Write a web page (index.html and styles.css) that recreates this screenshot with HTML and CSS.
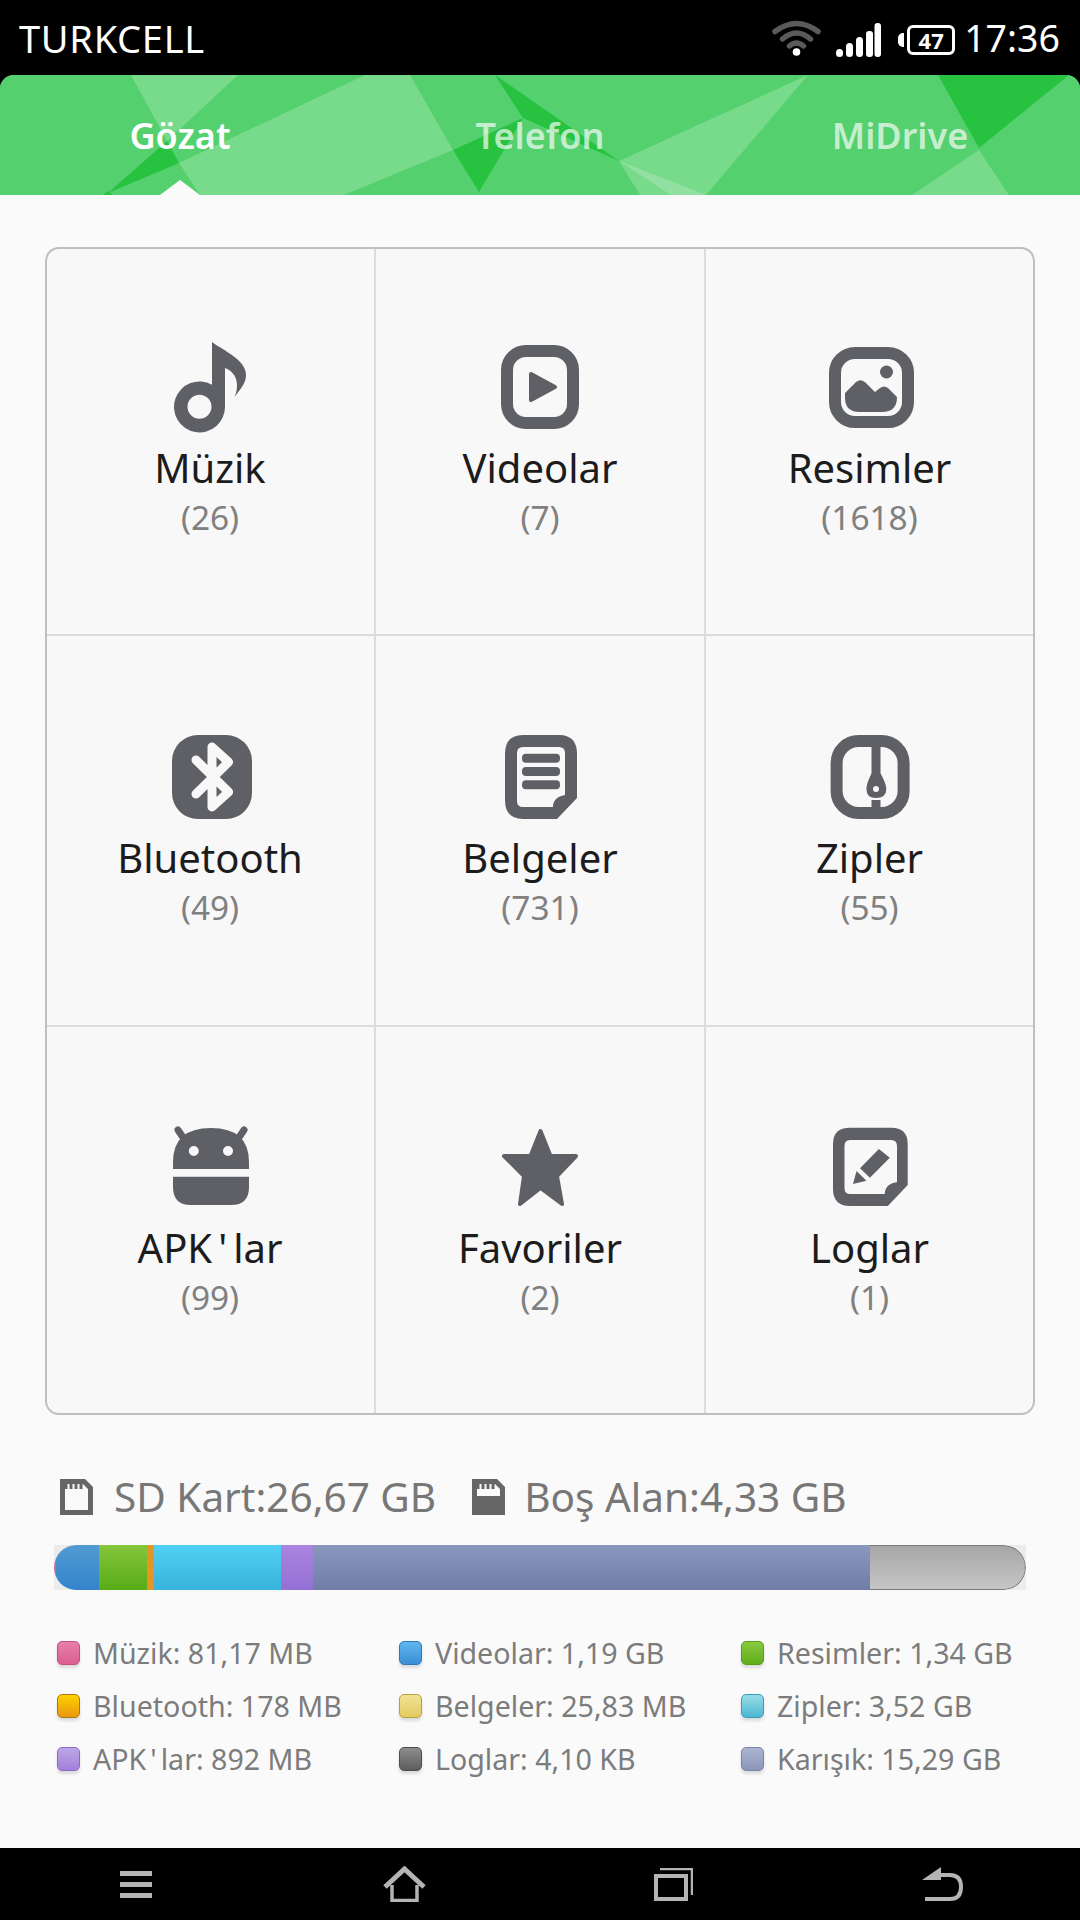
FILE: index.html
```html
<!DOCTYPE html>
<html lang="tr">
<head>
<meta charset="utf-8">
<title>Dosya Yöneticisi</title>
<link rel="stylesheet" href="styles.css">
</head>
<body>
<div class="screen">
  <header class="status">
    <span class="carrier">TURKCELL</span>
    <div class="status-right">
      <svg class="i-wifi" viewBox="0 0 49 37" width="49" height="37"><g fill="none" stroke="#5a5a5a" stroke-width="5.5" stroke-linecap="round"><path d="M3 12.5Q24.5 -3.5 46 12.5"/><path d="M10.500 20Q24.500 8 38.500 20"/><path d="M17.500 27Q24.500 21 31.500 27"/></g><circle cx="24.500" cy="33" r="3.800" fill="#fff"/></svg>
      <svg class="i-signal" viewBox="0 0 45 34" width="45" height="34"><g fill="#fff"><rect x="0" y="26" width="7" height="8" rx="3.500"/><rect x="10" y="20" width="7" height="14" rx="3.500"/><rect x="20" y="14" width="7" height="20" rx="3.500"/><rect x="30" y="8" width="7" height="26" rx="3"/><rect x="38.500" y="0" width="6.500" height="34" rx="3"/></g></svg>
      <div class="batt"><i class="batt-nub"></i><span class="batt-box">47</span></div>
      <span class="clock">17:36</span>
    </div>
  </header>

  <nav class="tabs">
    <svg class="tabs-bg" viewBox="0 75 1080 120" width="1080" height="120" preserveAspectRatio="none">
      <rect x="0" y="75" width="1080" height="120" fill="#54d06f"/>
      <g fill="#78da8b">
        <polygon points="131,75 238,75 167,141"/>
        <polygon points="365,75 410,75 453,150 344,195 200,195 179,163"/>
        <polygon points="619,161 808,75 706,195 640,195"/>
        <polygon points="979,150 1009,195 912,195"/>
      </g>
      <polygon points="619,161 706,195 671,195" fill="#92e1a2"/>
      <g fill="#27c240">
        <polygon points="167,141 179,163 108,193"/>
        <polygon points="108,191 103,195 113,195"/>
        <polygon points="453,150 523,118 479,192"/>
        <polygon points="495,75 523,118 619,161"/>
        <polygon points="938,75 1069,75 979,148"/>
      </g>
    </svg>
    <span class="tab tab-active">Gözat</span>
    <span class="tab">Telefon</span>
    <span class="tab">MiDrive</span>
    <i class="tab-pointer"></i>
  </nav>

  <main class="content">
    <section class="grid">
      <div class="cell">
        <svg class="icon" viewBox="0 0 100 92"><path fill-rule="evenodd" d="M52 0C64 9 86 18 86 33C86 42 80 47 74.600 55C78 47 80 32 65 26V64.500A25.500 25.500 0 1 1 52 42.700ZM39.500 52.700A12 12 0 1 0 39.500 76.700A12 12 0 1 0 39.500 52.700Z"/></svg>
        <span class="name">Müzik</span><span class="count">(26)</span>
      </div>
      <div class="cell">
        <svg class="icon" viewBox="0 0 100 92"><rect x="17" y="9" width="66" height="72" rx="19" class="ring"/><path d="M41 32L65 45L41 58Z" class="tri"/></svg>
        <span class="name">Videolar</span><span class="count">(7)</span>
      </div>
      <div class="cell">
        <svg class="icon" viewBox="0 0 100 92"><rect x="15" y="11" width="73" height="69" rx="20" class="ring"/><circle cx="66.500" cy="30" r="6.500"/><path d="M25 51L36 40Q41 36 46 41L55 50L60 46Q64 43 68 46L77 55Q77 70 62 70H40Q25 70 25 56Z"/></svg>
        <span class="name">Resimler</span><span class="count">(1618)</span>
      </div>
      <div class="cell">
        <svg class="icon" viewBox="0 0 100 92"><rect x="12" y="3" width="80" height="84" rx="26"/><path d="M36 28L68.600 60L52 75V15L68.600 30L36 62" class="bt"/></svg>
        <span class="name">Bluetooth</span><span class="count">(49)</span>
      </div>
      <div class="cell">
        <svg class="icon" viewBox="0 0 100 92"><path fill-rule="evenodd" d="M33 3H69Q87 3 87 22V66L67 87H33Q15 87 15 68V22Q15 3 33 3ZM33 15Q27 15 27 21V69Q27 75 33 75H63Q63 65 75 63V21Q75 15 69 15Z"/><rect x="32" y="21.700" width="38" height="9" rx="4"/><rect x="32" y="35" width="38" height="9" rx="4"/><rect x="32" y="48.300" width="38" height="9" rx="4"/></svg>
        <span class="name">Belgeler</span><span class="count">(731)</span>
      </div>
      <div class="cell">
        <svg class="icon" viewBox="0 0 100 92"><rect x="16.600" y="9" width="67" height="72" rx="22" class="ring"/><path fill-rule="evenodd" d="M51.500 10H60.500V41.300Q66.300 52 66.300 57Q66.300 66 56 66Q46.400 66 46.400 57Q46.400 52 51.500 41.300ZM56 54A3 3 0 1 0 56 60A3 3 0 1 0 56 54Z"/><rect x="51.500" y="68" width="9" height="12"/></svg>
        <span class="name">Zipler</span><span class="count">(55)</span>
      </div>
      <div class="cell">
        <svg class="icon" viewBox="0 0 100 92"><path fill-rule="evenodd" d="M13 47V40Q13 6 51 6Q89 6 89 40V47ZM33.800 24A5 5 0 1 0 33.800 34A5 5 0 1 0 33.800 24ZM68 24A5 5 0 1 0 68 34A5 5 0 1 0 68 24Z"/><path d="M13 54.700H89V65Q89 83 71 83H31Q13 83 13 65Z"/><path d="M18 8L26.500 20.500M84 8L75.500 20.500" class="ant"/></svg>
        <span class="name">APK<span class="apos">'</span>lar</span><span class="count">(99)</span>
      </div>
      <div class="cell">
        <svg class="icon" viewBox="0 0 100 92"><path d="M50.500 9L60.500 34H86L67 54L72 82L50.500 66L30 82L34 54L14 34H40.500Z" class="star"/></svg>
        <span class="name">Favoriler</span><span class="count">(2)</span>
      </div>
      <div class="cell">
        <svg class="icon" viewBox="0 0 100 92"><path fill-rule="evenodd" d="M30 5.700H71Q87.700 5.700 87.700 22V63L67.800 84H30Q13 84 13 67V22Q13 5.700 30 5.700ZM30 18Q24.500 18 24.500 24V66Q24.500 72 30 72H64.800Q64.800 62 77 60V24Q77 18 71 18Z"/><path d="M58.900 27L69.800 35.700L49.900 55.700L40 46.300Z"/><path d="M36.500 49L46.400 58.700L33 62Z"/></svg>
        <span class="name">Loglar</span><span class="count">(1)</span>
      </div>
    </section>

    <section class="storage">
      <svg class="sd" viewBox="0 0 33 36" width="33" height="36"><path d="M2.500 2.500H24L30.500 9V33.500H2.500Z" class="sd-line"/><path d="M6 1V10M11 1V10M16 1V10M21 1V10" class="sd-pins"/></svg>
      <span class="storage-text">SD Kart:26,67 GB</span>
      <svg class="sd sd-second" viewBox="0 0 33 36" width="33" height="36"><path d="M2.500 2.500H24L30.500 9V33.500H2.500Z" class="sd-line"/><path d="M6 1V10M11 1V10M16 1V10M21 1V10" class="sd-pins"/><rect x="5" y="17" width="23" height="14" class="sd-fill"/></svg>
      <span class="storage-text">Boş Alan:4,33 GB</span>
    </section>

    <div class="bar">
      <div class="bar-inner">
        <i class="seg seg-pink"></i><i class="seg seg-blue"></i><i class="seg seg-green"></i><i class="seg seg-orange"></i><i class="seg seg-cyan"></i><i class="seg seg-purple"></i><i class="seg seg-slate"></i><i class="seg seg-free"></i>
      </div>
    </div>

    <ul class="legend">
      <li><i class="sw sw-pink"></i>Müzik: 81,17 MB</li>
      <li><i class="sw sw-blue"></i>Videolar: 1,19 GB</li>
      <li><i class="sw sw-green"></i>Resimler: 1,34 GB</li>
      <li><i class="sw sw-amber"></i>Bluetooth: 178 MB</li>
      <li><i class="sw sw-yellow"></i>Belgeler: 25,83 MB</li>
      <li><i class="sw sw-cyan"></i>Zipler: 3,52 GB</li>
      <li><i class="sw sw-purple"></i><span>APK<span class="apos apos-small">'</span>lar: 892 MB</span></li>
      <li><i class="sw sw-gray"></i>Loglar: 4,10 KB</li>
      <li><i class="sw sw-slate"></i>Karışık: 15,29 GB</li>
    </ul>
  </main>

  <footer class="navbar">
    <svg viewBox="0 0 32 27" width="32" height="27"><g fill="#b4b4b4"><rect width="32" height="5"/><rect y="11" width="32" height="5"/><rect y="22" width="32" height="5"/></g></svg>
    <svg viewBox="0 0 43 36" width="43" height="36"><path d="M2 21L21.500 3L41 21" fill="none" stroke="#b4b4b4" stroke-width="5"/><path d="M9 19V34.500H34V19" fill="none" stroke="#b4b4b4" stroke-width="3.500"/></svg>
    <svg viewBox="0 0 39 33" width="39" height="33"><path d="M6 1H38V27" fill="none" stroke="#b4b4b4" stroke-width="2.500"/><rect x="2" y="8" width="30" height="23" fill="none" stroke="#b4b4b4" stroke-width="4"/></svg>
    <svg viewBox="0 0 41 34" width="41" height="34"><path d="M19 0V13H0Z" fill="#b4b4b4"/><path d="M19 8H28Q39 8 39 20Q39 32 28 32H3" fill="none" stroke="#b4b4b4" stroke-width="4"/></svg>
  </footer>
</div>
</body>
</html>
```

FILE: styles.css
```css
* { box-sizing: border-box; }
html, body { margin: 0; padding: 0; background: #000; }
.screen {
  width: 1080px;
  height: 1920px;
  display: flex;
  flex-direction: column;
  font-family: "Noto Sans", "Open Sans", sans-serif;
  overflow: hidden;
  background: #000;
}

/* Status bar */
.status {
  height: 75px;
  flex: none;
  display: flex;
  align-items: center;
  justify-content: space-between;
  padding: 0 20px 0 19px;
  color: #fff;
}
.carrier { font-size: 38px; letter-spacing: 0.7px; }
.status-right { display: flex; align-items: center; }
.i-wifi { margin-right: 15px; }
.i-signal { margin-right: 17px; margin-top: 5px; }
.batt { display: flex; align-items: center; margin-right: 9px; margin-top: 5px; }
.batt-nub {
  display: block;
  width: 6px;
  height: 14px;
  margin-right: 3px;
  background: #fff;
  border-radius: 5px 0 0 5px;
}
.batt-box {
  width: 48px;
  height: 30px;
  border: 3px solid #fff;
  border-radius: 6px;
  display: flex;
  align-items: center;
  justify-content: center;
  font-size: 22px;
  font-weight: 700;
  line-height: 24px;
}
.clock { font-size: 37.500px; }

/* Tabs */
.tabs {
  position: relative;
  height: 120px;
  flex: none;
  display: grid;
  grid-template-columns: repeat(3, 1fr);
  align-items: center;
  text-align: center;
  border-radius: 14px 14px 0 0;
  overflow: hidden;
  background: #54d06f;
}
.tabs-bg { position: absolute; left: 0; top: 0; }
.tab {
  position: relative;
  font-size: 36px;
  font-weight: 600;
  color: rgba(255, 255, 255, 0.68);
}
.tab-active { color: #fff; }
.tab-pointer {
  position: absolute;
  left: 160px;
  bottom: 0;
  width: 0;
  height: 0;
  border-left: 20px solid transparent;
  border-right: 20px solid transparent;
  border-bottom: 15px solid #fafafa;
}

/* Content */
.content {
  flex: 1;
  background: #fafafa;
  padding: 52px 45px 0;
  display: flex;
  flex-direction: column;
}
.grid {
  height: 1168px;
  flex: none;
  display: grid;
  grid-template-columns: 329px 330px 329px;
  grid-template-rows: 387px 391px 386px;
  border: 2px solid #bfbfbf;
  border-radius: 14px;
  background: #f8f8f8;
  overflow: hidden;
}
.cell {
  display: flex;
  flex-direction: column;
  align-items: center;
  padding-top: 93px;
  border-right: 2px solid #dcdcdc;
  border-bottom: 2px solid #dcdcdc;
}
.cell:nth-child(n+4) { padding-top: 96px; }
.cell:nth-child(n+7) { padding-top: 95px; border-bottom: 0; }
.cell:nth-child(3n+1) { padding-right: 1px; }
.cell:nth-child(3n) { border-right: 0; padding-right: 2px; }
.icon { width: 100px; height: 92px; fill: #5f6066; flex: none; }
.ring { fill: none; stroke: #5f6066; stroke-width: 12; }
.tri { stroke: #5f6066; stroke-width: 4; stroke-linejoin: round; }
.bt { fill: none; stroke: #f8f8f8; stroke-width: 9; stroke-linecap: round; stroke-linejoin: round; }
.ant { fill: none; stroke: #5f6066; stroke-width: 7; stroke-linecap: round; }
.star { stroke: #5f6066; stroke-width: 4; stroke-linejoin: round; }
.name { font-size: 40px; line-height: 52px; color: #1c1c1c; margin-top: 8px; }
.apos { margin: 0 6px; }
.apos-small { margin: 0 4px; }
.count { font-size: 33.400px; line-height: 44px; color: #808080; margin-top: 1px; }

/* Storage */
.storage {
  display: flex;
  align-items: center;
  margin-top: 41px;
  padding-left: 15px;
  height: 80px;
  color: #777;
}
.sd { flex: none; margin-top: 2px; }
.sd-second { margin-left: 36px; }
.sd-line { fill: none; stroke: #666; stroke-width: 5; }
.sd-pins { fill: none; stroke: #666; stroke-width: 3; }
.sd-fill { fill: #666; }
.storage-text { font-size: 40.500px; margin-left: 21px; }
.sd-second + .storage-text { margin-left: 19px; }
.bar {
  margin: 9px 9px 0;
  height: 45px;
  flex: none;
  background: #ececec;
}
.bar-inner {
  height: 100%;
  display: flex;
  border-radius: 23px;
  overflow: hidden;
}
.seg { display: block; height: 100%; flex: none; }
.seg-pink { width: 2px; background: #d9618f; }
.seg-blue { width: 43px; background: linear-gradient(#519bd2, #3484cd); }
.seg-green { width: 48px; background: linear-gradient(#86c53c, #57ac16); }
.seg-orange { width: 7px; background: #e69422; }
.seg-cyan { width: 127px; background: linear-gradient(#50d1f3, #39b3dd); }
.seg-purple { width: 32px; background: linear-gradient(#aa84df, #9470d5); }
.seg-slate { width: 557px; background: linear-gradient(#8a97bd, #707ea8); }
.seg-free {
  flex: 1;
  background: linear-gradient(#a6a6a6, #c6c6c6);
  border: 1px solid #7a7a7a;
  border-left: 0;
  border-radius: 0 23px 23px 0;
}

/* Legend */
.legend {
  list-style: none;
  margin: 36px 0 0;
  padding: 0 0 0 12px;
  display: grid;
  grid-template-columns: 342px 342px 1fr;
  grid-auto-rows: 53px;
  font-size: 28.600px;
  color: #7c7c7c;
}
.legend li { display: flex; align-items: center; white-space: nowrap; }
.sw {
  flex: none;
  width: 23px;
  height: 24px;
  margin-right: 13px;
  border-radius: 5px;
  border: 1px solid;
  box-shadow: 0 3px 3px rgba(0, 0, 0, 0.12);
}
.sw-pink { background: linear-gradient(#e87fa8, #db5f92); border-color: #c24f80; }
.sw-blue { background: linear-gradient(#5fb6ec, #3a8ed6); border-color: #2f78b8; }
.sw-green { background: linear-gradient(#8ac93f, #5fae1a); border-color: #559f18; }
.sw-amber { background: linear-gradient(#ffd000, #e8980f); border-color: #b07810; }
.sw-yellow { background: linear-gradient(#f1e295, #e4cb5f); border-color: #bba040; }
.sw-cyan { background: linear-gradient(#9adce7, #4bb7d3); border-color: #389eb9; }
.sw-purple { background: linear-gradient(#bba7e6, #a47fd9); border-color: #8d68c4; }
.sw-gray { background: linear-gradient(#8d8d8d, #5d5d5d); border-color: #4e4e4e; }
.sw-slate { background: linear-gradient(#abb4d1, #8c96b8); border-color: #7a84a8; }

/* Navigation bar */
.navbar {
  height: 72px;
  flex: none;
  background: #000;
  display: grid;
  grid-template-columns: repeat(4, 269px);
  justify-items: center;
  align-items: center;
  padding-left: 1px;
}
```
